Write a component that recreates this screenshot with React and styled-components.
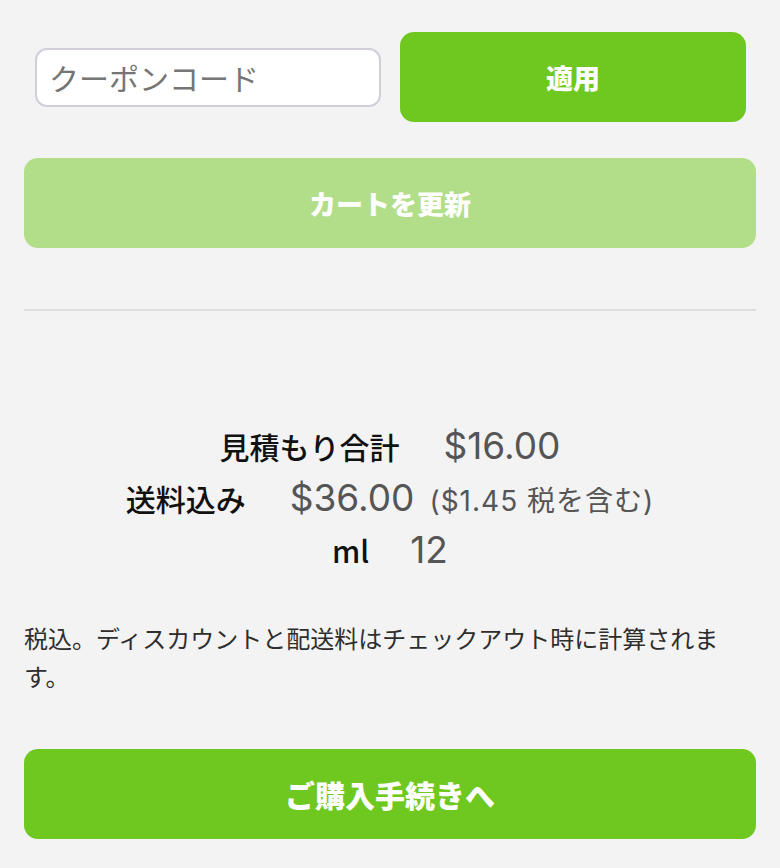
import React, { useState } from 'react';
import styled, { createGlobalStyle } from 'styled-components';

const GlobalStyle = createGlobalStyle`
  html, body {
    margin: 0;
    padding: 0;
    background: #f3f3f3;
  }
  body {
    font-family: Inter, 'Noto Sans CJK JP', sans-serif;
  }
`;

const Page = styled.div`
  min-height: 868px;
  padding: 32px 24px 30px;
  box-sizing: border-box;
  background: #f3f3f3;
`;

const CouponRow = styled.div`
  display: grid;
  grid-template-columns: minmax(0, 1fr) minmax(0, 1fr);
  align-items: center;
  gap: 19px;
  padding: 0 10px 0 11px;
`;

const CouponInput = styled.input`
  width: 100%;
  min-width: 0;
  height: 59px;
  box-sizing: border-box;
  border: 2px solid #d2ccdb;
  border-radius: 12px;
  background: #fff;
  padding: 0 12px;
  font-family: 'Noto Sans CJK JP', sans-serif;
  font-size: 30px;
  color: #333;
  outline: none;

  &::placeholder {
    color: #757575;
  }
`;

const Button = styled.button`
  display: block;
  width: 100%;
  height: 90px;
  border: none;
  border-radius: 14px;
  background: ${p => (p.$muted ? '#b2de8a' : '#6fc820')};
  color: #fff;
  font-family: 'Noto Sans CJK JP', sans-serif;
  font-weight: 800;
  font-size: ${p => p.$size || 27}px;
  cursor: pointer;
`;

const UpdateWrap = styled.div`
  margin-top: 36px;
`;

const Divider = styled.hr`
  margin: 61px 0 0;
  border: none;
  height: 2px;
  background: #dedede;
`;

const Totals = styled.div`
  margin-top: 109px;
  display: flex;
  flex-direction: column;
  align-items: center;
`;

const TotalRow = styled.div`
  display: flex;
  align-items: baseline;
  justify-content: center;
  gap: ${p => p.$gap || 44}px;
  height: 52px;
  line-height: 52px;
`;

const Label = styled.span`
  font-family: 'Noto Sans CJK JP', sans-serif;
  font-weight: 500;
  font-size: 30px;
  color: #111;
`;

const Value = styled.span`
  font-family: Inter, 'Noto Sans CJK JP', sans-serif;
  font-size: 37px;
  color: #555;
`;

const TaxNote = styled.span`
  font-family: Inter, 'Noto Sans CJK JP', sans-serif;
  font-size: 28px;
  letter-spacing: 1px;
  color: #555;
  margin-left: 15px;
`;

const Note = styled.p`
  margin: 43px 0 0;
  max-width: 712px;
  font-family: 'Noto Sans CJK JP', sans-serif;
  font-size: 24px;
  line-height: 38px;
  color: #2e2e2e;
`;

const CheckoutWrap = styled.div`
  margin-top: 54px;
`;

export default function App() {
  const [coupon, setCoupon] = useState('');

  return (
    <Page>
      <GlobalStyle />
      <CouponRow>
        <CouponInput
          value={coupon}
          onChange={e => setCoupon(e.target.value)}
          placeholder="クーポンコード"
        />
        <Button type="button">適用</Button>
      </CouponRow>
      <UpdateWrap>
        <Button type="button" $muted>カートを更新</Button>
      </UpdateWrap>
      <Divider />
      <Totals>
        <TotalRow>
          <Label>見積もり合計</Label>
          <Value>$16.00</Value>
        </TotalRow>
        <TotalRow>
          <Label>送料込み</Label>
          <span>
            <Value>$36.00</Value>
            <TaxNote>($1.45 税を含む)</TaxNote>
          </span>
        </TotalRow>
        <TotalRow $gap={41}>
          <Label>ml</Label>
          <Value>12</Value>
        </TotalRow>
      </Totals>
      <Note>税込。ディスカウントと配送料はチェックアウト時に計算されます。</Note>
      <CheckoutWrap>
        <Button type="button" $size={30}>ご購入手続きへ</Button>
      </CheckoutWrap>
    </Page>
  );
}
